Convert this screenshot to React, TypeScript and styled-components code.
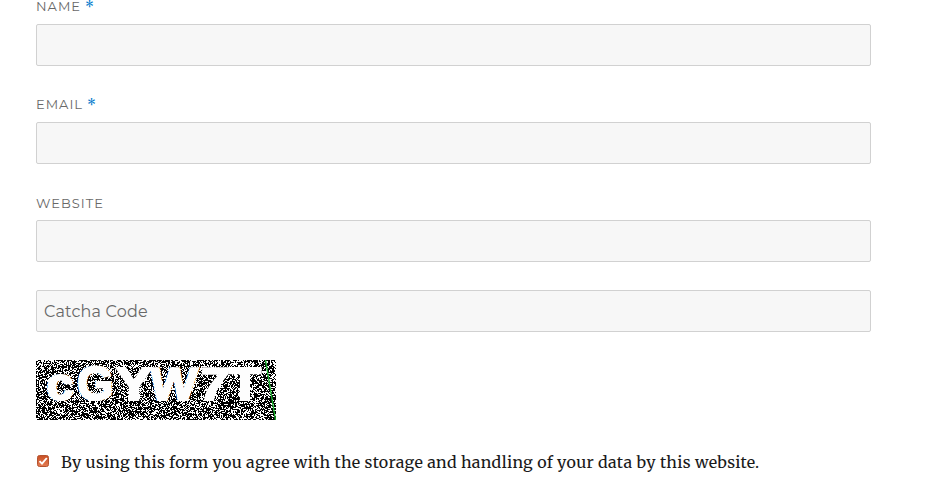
import React from 'react';
import styled, { createGlobalStyle } from 'styled-components';

const GlobalStyle = createGlobalStyle`
  * { box-sizing: border-box; }
  body { margin: 0; background: #fff; overflow: hidden; }
`;

const Form = styled.form`
  width: 871px;
  height: 479px;
  padding-left: 36px;
  font-family: Montserrat, Inter, sans-serif;
`;

const Field = styled.div<{ $first?: boolean }>`
  height: ${(p) => (p.$first ? '66px' : '98px')};
  display: flex;
  flex-direction: column;
  justify-content: flex-end;
`;

const Label = styled.label<{ $gap: number }>`
  display: flex;
  align-items: flex-start;
  height: 16px;
  margin-bottom: ${(p) => p.$gap}px;
  color: #686868;
  font-size: 13px;
  font-weight: 400;
  line-height: 16px;
  letter-spacing: 1px;
  text-transform: uppercase;
`;

const Required = styled.span`
  margin-left: 4px;
  color: #007acc;
  font-family: Merriweather, 'Noto Sans', serif;
  font-size: 14px;
  font-weight: 400;
  line-height: 17px;
`;

const Input = styled.input`
  display: block;
  width: 100%;
  height: 42px;
  flex: none;
  padding: 0 7px;
  border: 1px solid #d1d1d1;
  border-radius: 2px;
  background: #f7f7f7;
  color: #686868;
  font-family: Montserrat, Inter, sans-serif;
  font-size: 16px;
  outline: none;
  &::placeholder { color: #686868; opacity: 1; font-weight: 400; letter-spacing: 0.2px; }
`;

const CodeField = styled.div`
  margin-top: 28px;
`;

const Captcha = styled.svg`
  display: block;
  margin-top: 28px;
`;

const Consent = styled.label`
  display: flex;
  align-items: center;
  height: 28px;
  margin-top: 28px;
  color: #1a1a1a;
  font-family: Merriweather, 'DejaVu Serif Condensed', 'DejaVu Serif', serif;
  font-size: 16px;
  white-space: nowrap;
`;

const CheckMark = styled.svg`
  flex: none;
  margin: 0 11px 2px 0;
`;

const ConsentText = styled.span`
  letter-spacing: 0.295px;
`;

function noisePath(width: number, height: number) {
  let seed = 7219;
  let d = '';
  for (let y = 0; y < height; y++) {
    for (let x = 0; x < width; x++) {
      seed = (Math.imul(seed, 1664525) + 1013904223) >>> 0;
      if (seed / 4294967296 < 0.4) d += `M${x} ${y}h1v1h-1z`;
    }
  }
  return d;
}

const NOISE = noisePath(240, 60);

const GLYPHS = [
  { ch: 'c', x: 10.5, y: 40, w: 27, size: 46, tilt: 0 },
  { ch: 'G', x: 41, y: 40, w: 36.5, size: 48, tilt: 0 },
  { ch: 'Y', x: 80, y: 40, w: 36, size: 46, tilt: 0 },
  { ch: 'W', x: 113, y: 40, w: 47, size: 46, tilt: -4 },
  { ch: '7', x: 162, y: 40, w: 29, size: 46, tilt: -6 },
  { ch: 'T', x: 193, y: 40, w: 32, size: 46, tilt: 0 },
];

function CaptchaImage() {
  return (
    <Captcha width="240" height="60" viewBox="0 0 240 60">
      <rect width="240" height="60" fill="#000" />
      <path d={NOISE} fill="#fff" shapeRendering="crispEdges" />
      <g
        fill="#fdfdfd"
        stroke="#fdfdfd"
        strokeWidth="2.2"
        fontFamily="Liberation Sans, Arial, sans-serif"
        fontWeight="700"
      >
        {GLYPHS.map((g) => (
          <text
            key={g.ch}
            transform={`translate(${g.x} ${g.y}) skewX(${g.tilt})`}
            fontSize={g.size}
            textLength={g.w}
            lengthAdjust="spacingAndGlyphs"
          >
            {g.ch}
          </text>
        ))}
      </g>
      <path d="M229.5 0L239.5 60" stroke="#18b52c" strokeWidth="1.3" fill="none" />
    </Captcha>
  );
}

export default function App() {
  return (
    <>
      <GlobalStyle />
      <Form>
        <Field $first>
          <Label htmlFor="author" $gap={10}>
            Name <Required>*</Required>
          </Label>
          <Input id="author" />
        </Field>
        <Field>
          <Label htmlFor="email" $gap={10}>
            Email <Required>*</Required>
          </Label>
          <Input id="email" />
        </Field>
        <Field>
          <Label htmlFor="url" $gap={9}>
            Website
          </Label>
          <Input id="url" />
        </Field>
        <CodeField>
          <Input placeholder="Catcha Code" />
        </CodeField>
        <CaptchaImage />
        <Consent>
          <CheckMark width="14" height="14" viewBox="0 0 14 14">
            <defs>
              <linearGradient id="tick-fill" x1="0" y1="0" x2="0" y2="1">
                <stop offset="0" stopColor="#c84f24" />
                <stop offset="1" stopColor="#e37c52" />
              </linearGradient>
            </defs>
            <rect x="1.5" y="1.5" width="11" height="11" rx="2" fill="url(#tick-fill)" stroke="#b5532f" />
            <path d="M3.5 7.2L6 9.7L10.8 4" fill="none" stroke="#fff" strokeWidth="1.9" />
          </CheckMark>
          <ConsentText>
            By using this form you agree with the storage and handling of your data by this website.
          </ConsentText>
        </Consent>
      </Form>
    </>
  );
}
